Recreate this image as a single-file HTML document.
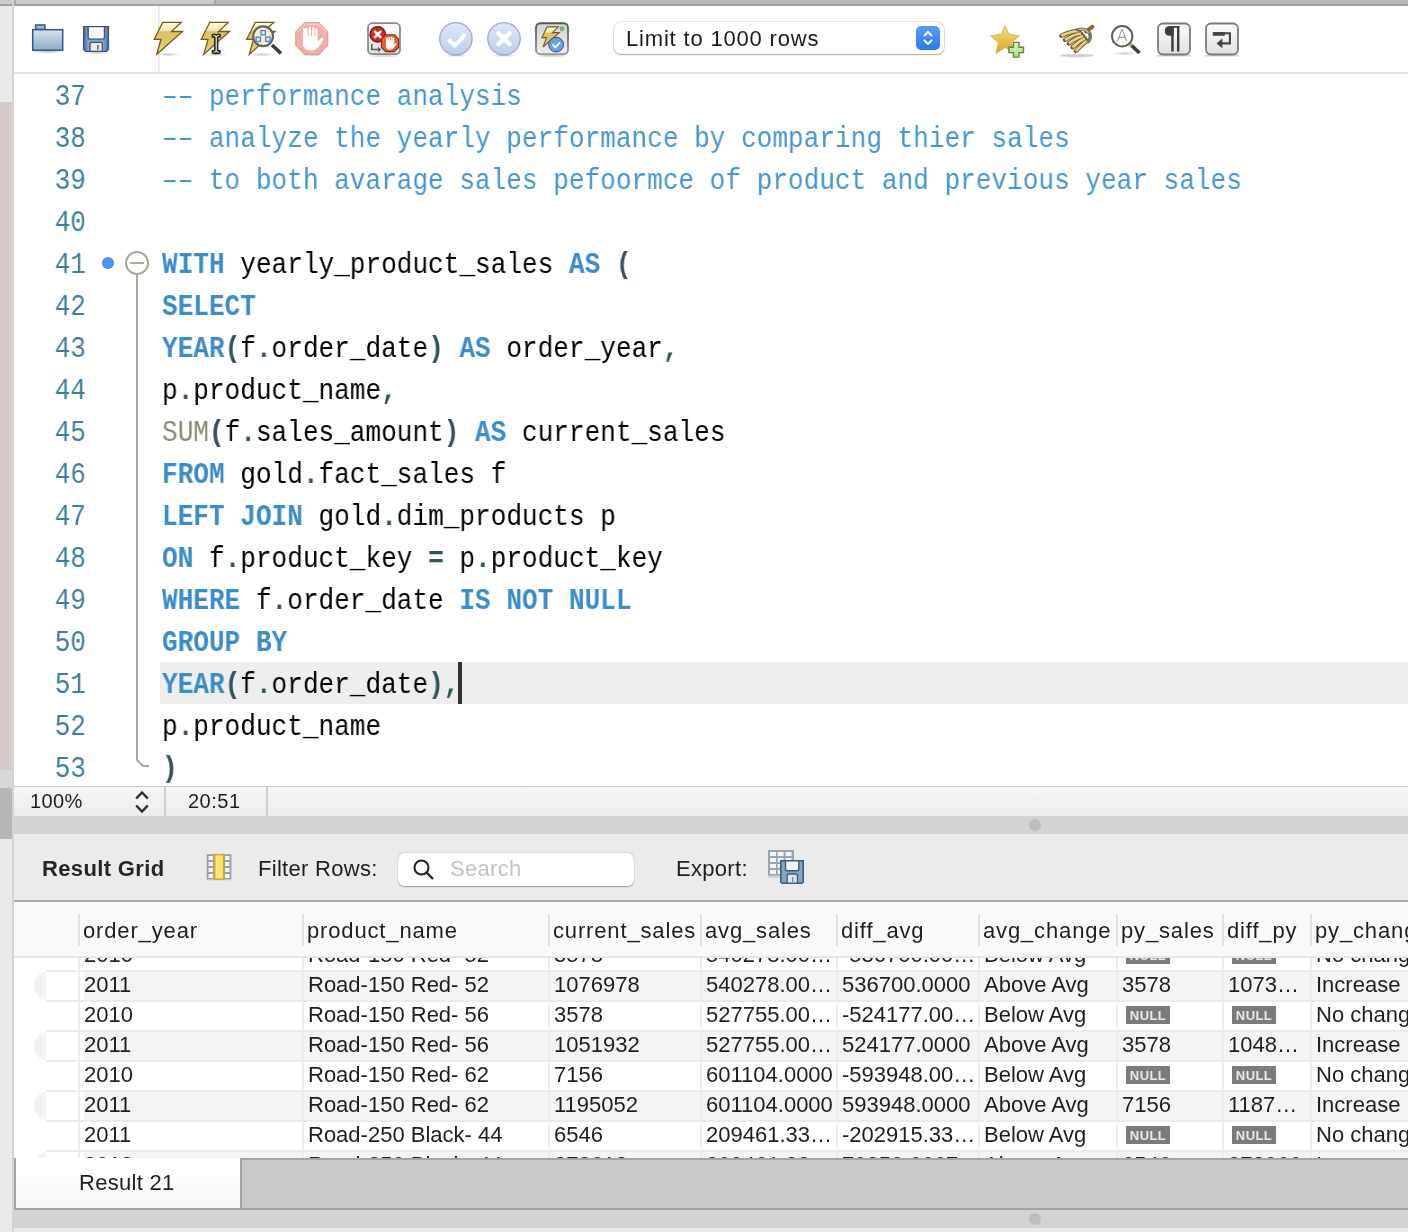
<!DOCTYPE html><html><head><meta charset="utf-8"><style>*{margin:0;padding:0;box-sizing:border-box}
html,body{width:1408px;height:1232px;overflow:hidden;background:#fff;font-family:"Liberation Sans",sans-serif}
.abs,.ln,.code,.row,.cell,.hdr,.htxt{will-change:transform}
.abs{position:absolute}
#left{left:0;top:0;width:12px;height:1232px;background:#e9e9e9}
#leftpink{left:0;top:102px;width:12px;height:668px;background:#d6cac9}
#leftg1{left:0;top:770px;width:12px;height:18px;background:#d8d8d8}
#leftg2{left:0;top:788px;width:12px;height:51px;background:#b6b6b6}
#leftb{left:12px;top:0;width:2px;height:1232px;background:#d3d3d3}
#topbar{left:14px;top:0;width:1394px;height:6px;background:#b9b9b9}
#topleft{left:0;top:0;width:12px;height:4px;background:#cbcbcb}
#toolbar{left:14px;top:6px;width:1394px;height:66px;background:#fff}
#tbline{left:14px;top:72px;width:1394px;height:2px;background:#e3e3e3}
#editor{left:14px;top:74px;width:1394px;height:712px;background:#fff;overflow:hidden}
.ln{position:absolute;left:0;width:72px;text-align:right;font-family:"Liberation Mono",monospace;font-size:29px;transform:scaleX(0.8993);transform-origin:right;color:#3a7f9b;height:42px;line-height:42px}
.code{position:absolute;left:148px;font-family:"Liberation Mono",monospace;font-size:29px;transform:scaleX(0.8993);transform-origin:left;height:42px;line-height:42px;white-space:pre;color:#000}
.k{color:#3b8dca;font-weight:bold}
.c{color:#4496d2}
.p{color:#2f5459;font-weight:bold}
.f{color:#8b8a74}
#status{left:14px;top:786px;width:1394px;height:30px;background:linear-gradient(#f6f6f6,#ececec);border-top:1px solid #c8c8c8}
#split1{left:14px;top:816px;width:1394px;height:18px;background:#d3d3d3}
#rtool{left:14px;top:834px;width:1394px;height:66px;background:#ebebeb}
#grid{left:14px;top:900px;width:1394px;height:258px;background:#fff;overflow:hidden;border-top:2px solid #a9a9a9}
#grid{border-top:none}
#tabbar{left:14px;top:1158px;width:1394px;height:52px;background:#c9c9c9;border-top:2px solid #a5a5a5;border-bottom:2px solid #a3a3a3}
#split2{left:14px;top:1210px;width:1394px;height:18px;background:#d3d3d3}
#bottom{left:14px;top:1228px;width:1394px;height:4px;background:#ebebeb}
.ui{font-family:"Liberation Sans",sans-serif;color:#1e1e1e}
.hdr{position:absolute;top:0;height:58px;background:#f8f9f9;width:1394px;left:0;border-top:2px solid #a9a9a9;border-bottom:2px solid #e6e6e6;z-index:2}
.hsep{position:absolute;top:12px;width:2px;height:32px;background:#e3e3e3}
.htxt{position:absolute;top:16px;font-size:22px;line-height:26px;color:#1e1e1e;white-space:nowrap;letter-spacing:0.85px}
.row{position:absolute;left:0;width:1394px;height:30px;border-bottom:2px solid #ebebeb;border-image:linear-gradient(to right,#fff 0,#fff 32px,#ebebeb 32px) 0 0 1 0}
.cell{position:absolute;top:0;font-size:22px;line-height:25px;color:#1e1e1e;white-space:nowrap;overflow:hidden}
.csep{position:absolute;top:0;width:2px;height:30px;background:#ececec}
.null{position:absolute;top:4px;background:#7b7b7b;color:#e9e9e9;font-size:13px;font-weight:bold;height:18px;line-height:19px;width:44px;text-align:center;letter-spacing:0.4px}
</style></head><body>
<div id="left" class="abs"></div><div id="leftpink" class="abs"></div><div id="leftg1" class="abs"></div><div id="leftg2" class="abs"></div>
<div id="leftb" class="abs"></div>
<div id="topbar" class="abs"><div class="abs" style="left:0;top:0;width:200px;height:4px;background:#cbcbcb"></div><div class="abs" style="left:200px;top:0;width:2px;height:4px;background:#a9a9a9"></div><div class="abs" style="left:0;top:4px;width:1394px;height:2px;background:#a0a0a0"></div></div>
<div id="topleft" class="abs"></div><div class="abs" style="left:0;top:4px;width:12px;height:2px;background:#a0a0a0"></div><div class="abs" style="left:14px;top:0;width:2px;height:4px;background:#a3a3a3"></div>
<div id="toolbar" class="abs"></div>
<svg class="abs" style="left:0;top:0;z-index:5" width="1408" height="74" viewBox="0 0 1408 74">
<defs>
<linearGradient id="gFold" x1="0" y1="0" x2="0" y2="1"><stop offset="0" stop-color="#d6e4f0"/><stop offset="1" stop-color="#8eaac6"/></linearGradient>
<linearGradient id="gFlop" x1="0" y1="0" x2="1" y2="0"><stop offset="0" stop-color="#4f7499"/><stop offset="0.2" stop-color="#86a5c2"/><stop offset="0.8" stop-color="#86a5c2"/><stop offset="1" stop-color="#4f7499"/></linearGradient>
<linearGradient id="gBolt" x1="0" y1="0" x2="0" y2="1"><stop offset="0" stop-color="#fdf9e6"/><stop offset="0.27" stop-color="#f0e6b4"/><stop offset="0.29" stop-color="#d8c366"/><stop offset="0.7" stop-color="#dbc868"/><stop offset="1" stop-color="#f0e4a0"/></linearGradient>
<linearGradient id="gBlueC" x1="0" y1="0" x2="0" y2="1"><stop offset="0" stop-color="#dde8f8"/><stop offset="1" stop-color="#bccfea"/></linearGradient>
<linearGradient id="gBox" x1="0" y1="0" x2="0" y2="1"><stop offset="0" stop-color="#fdfdfd"/><stop offset="1" stop-color="#e0e0e0"/></linearGradient>
<linearGradient id="gBox2" x1="0" y1="0" x2="0" y2="1"><stop offset="0" stop-color="#d4d4d4"/><stop offset="1" stop-color="#ececec"/></linearGradient>
<linearGradient id="gBox2b" x1="0" y1="0" x2="0" y2="1"><stop offset="0" stop-color="#585858"/><stop offset="1" stop-color="#9a9a9a"/></linearGradient>
<linearGradient id="gStar" x1="0" y1="0" x2="0" y2="1"><stop offset="0" stop-color="#f6e27a"/><stop offset="1" stop-color="#dba236"/></linearGradient>
<linearGradient id="gPlus" x1="0" y1="0" x2="0" y2="1"><stop offset="0" stop-color="#d8f5c4"/><stop offset="1" stop-color="#a7dc86"/></linearGradient>
<radialGradient id="gShadow"><stop offset="0" stop-color="#000" stop-opacity="0.22"/><stop offset="1" stop-color="#000" stop-opacity="0"/></radialGradient>
<clipPath id="cb1"><path d="M8.7 0.4 H27.2 L17.4 9.5 H28.5 L2.8 32.2 L7 17.3 H0.2 Z" transform="translate(154 22)"/></clipPath><clipPath id="cb2"><path d="M8.7 0.4 H27.2 L17.4 9.5 H28.5 L2.8 32.2 L7 17.3 H0.2 Z" transform="translate(201 22)"/></clipPath><clipPath id="cb3"><path d="M8.7 0.4 H27.2 L17.4 9.5 H28.5 L2.8 32.2 L7 17.3 H0.2 Z" transform="translate(246.5 22)"/></clipPath>
</defs>
<!-- folder -->
<ellipse cx="47.5" cy="52" rx="16" ry="1.8" fill="url(#gShadow)"/>
<path d="M35.5 29.5 V25 H45 V29.5 Z" fill="#9ab5cf" stroke="#2f5a85" stroke-width="1.4"/>
<rect x="32.7" y="29.7" width="30" height="20.6" fill="url(#gFold)" stroke="#2f5a85" stroke-width="1.5"/>
<!-- floppy -->
<ellipse cx="96" cy="53" rx="13" ry="1.6" fill="url(#gShadow)"/>
<path d="M83.7 26.6 H108.4 V49.5 L106.5 51.4 H85.6 L83.7 49.5 Z" fill="url(#gFlop)" stroke="#35597c" stroke-width="1.4"/>
<path d="M88.2 26.6 V37 Q88.2 39.2 90.4 39.2 H102.2 Q104.4 39.2 104.4 37 V26.6 Z" fill="#fff" stroke="#35597c" stroke-width="1.3"/>
<path d="M90 51.4 V44 Q90 42.3 91.7 42.3 H100.6 Q102.3 42.3 102.3 44 V51.4 Z" fill="#e9e9e9" stroke="#35597c" stroke-width="1.3"/>
<rect x="97" y="45" width="1.8" height="4.8" fill="#777"/>
<line x1="158.8" y1="6" x2="158.8" y2="72" stroke="#e3e3e3" stroke-width="1.5"/>
<!-- bolt 1 -->
<ellipse cx="168" cy="54.5" rx="13" ry="1.8" fill="url(#gShadow)"/>
<path d="M8.7 0.4 H27.2 L17.4 9.5 H28.5 L2.8 32.2 L7 17.3 H0.2 Z" transform="translate(154 22)" fill="url(#gBolt)"/><path d="M8.7 0.4 H27.2 L17.4 9.5 H28.5 L2.8 32.2 L7 17.3 H0.2 Z" transform="translate(154 22)" fill="none" stroke="#fffbe6" stroke-width="4" clip-path="url(#cb1)" stroke-opacity="0.85"/><path d="M8.7 0.4 H27.2 L17.4 9.5 H28.5 L2.8 32.2 L7 17.3 H0.2 Z" transform="translate(154 22)" fill="none" stroke="#7a5a17" stroke-width="1.3"/>
<!-- bolt 2 + ibeam -->
<ellipse cx="215" cy="54.5" rx="13" ry="1.8" fill="url(#gShadow)"/>
<path d="M8.7 0.4 H27.2 L17.4 9.5 H28.5 L2.8 32.2 L7 17.3 H0.2 Z" transform="translate(201 22)" fill="url(#gBolt)"/><path d="M8.7 0.4 H27.2 L17.4 9.5 H28.5 L2.8 32.2 L7 17.3 H0.2 Z" transform="translate(201 22)" fill="none" stroke="#fffbe6" stroke-width="4" clip-path="url(#cb2)" stroke-opacity="0.85"/><path d="M8.7 0.4 H27.2 L17.4 9.5 H28.5 L2.8 32.2 L7 17.3 H0.2 Z" transform="translate(201 22)" fill="none" stroke="#7a5a17" stroke-width="1.3"/>
<path d="M212.5 34.8 Q214.3 33.6 216.2 35 Q218.1 33.6 219.9 34.8 V36.8 Q218.6 36.4 217.6 37.4 V50.3 Q218.6 51.3 219.9 50.9 V52.9 Q218.1 54.1 216.2 52.7 Q214.3 54.1 212.5 52.9 V50.9 Q213.8 51.3 214.8 50.3 V37.4 Q213.8 36.4 212.5 36.8 Z" fill="#fff" stroke="#2a2a2a" stroke-width="1.7"/>
<!-- bolt 3 + magnifier -->
<ellipse cx="262" cy="54.5" rx="13" ry="1.8" fill="url(#gShadow)"/>
<path d="M8.7 0.4 H27.2 L17.4 9.5 H28.5 L2.8 32.2 L7 17.3 H0.2 Z" transform="translate(246.5 22)" fill="url(#gBolt)"/><path d="M8.7 0.4 H27.2 L17.4 9.5 H28.5 L2.8 32.2 L7 17.3 H0.2 Z" transform="translate(246.5 22)" fill="none" stroke="#fffbe6" stroke-width="4" clip-path="url(#cb3)" stroke-opacity="0.85"/><path d="M8.7 0.4 H27.2 L17.4 9.5 H28.5 L2.8 32.2 L7 17.3 H0.2 Z" transform="translate(246.5 22)" fill="none" stroke="#7a5a17" stroke-width="1.3"/>
<line x1="272" y1="45" x2="281" y2="53.5" stroke="#3e3e3e" stroke-width="3.6" stroke-linecap="butt"/>
<circle cx="263.1" cy="36.3" r="9.9" fill="#fbf6dc" fill-opacity="0.85" stroke="#626262" stroke-width="2.2"/>
<rect x="261" y="30.5" width="4.4" height="4.4" fill="#dfe8f6" stroke="#4f7fc6" stroke-width="1.3"/>
<rect x="256.1" y="37.1" width="4.4" height="4.4" fill="#dfe8f6" stroke="#4f7fc6" stroke-width="1.3"/>
<rect x="265.7" y="37.1" width="4.4" height="4.4" fill="#dfe8f6" stroke="#4f7fc6" stroke-width="1.3"/>
<!-- stop hand -->
<ellipse cx="312" cy="54.5" rx="14" ry="1.5" fill="url(#gShadow)"/>
<path d="M305 22.6 H318.6 L327.7 32 V45.3 L318.6 54.6 H305 L295.8 45.3 V32 Z" fill="#efafa6" stroke="#d99f98" stroke-width="1.2"/>
<path d="M303 28 V44 Q303 50.5 310.5 50.5 Q316.5 50.5 320 45 L323.5 39 Q322 37 320.5 38.5 L317.6 41.6 V29 Q316.5 27.5 315.4 29 V36 H314.4 V27.5 Q313.2 26 312 27.5 V36 H311 V27.5 Q309.8 26 308.6 27.5 V36 H307.6 V28.5 Q306.4 27 305.2 28.5 Z" fill="#fff"/>
<path d="M297 32.3 L305.3 24 H318.3 L326.5 32.3" fill="none" stroke="#fbe1dd" stroke-width="1"/>
<!-- stop on error box -->
<ellipse cx="384" cy="56" rx="17" ry="1.6" fill="url(#gShadow)"/>
<rect x="368" y="23.2" width="32" height="31" rx="4.5" fill="url(#gBox)" stroke="#888" stroke-width="1.8"/>
<path d="M371.8 44 V49.5 H378.5" fill="none" stroke="#5a5a5a" stroke-width="1.6"/>
<path d="M378 46.8 L381.3 49.5 L378 52.2 Z" fill="#5a5a5a"/>
<circle cx="377.7" cy="34.4" r="7.8" fill="#c8281f" stroke="#6e1515" stroke-width="1.2"/>
<path d="M374.2 30.9 L381.2 37.9 M381.2 30.9 L374.2 37.9" stroke="#fff" stroke-width="2.6"/>
<path d="M385.6 34.8 H394.4 L398.5 38.9 V47.5 L394.4 51.6 H385.6 L381.5 47.5 V38.9 Z" fill="#e5602f" stroke="#8a2512" stroke-width="1.1"/>
<path d="M386 40 V46 Q386 49.8 389.8 49.8 Q393 49.8 394.6 47 L396.6 43.6 Q395.9 42.6 395 43.4 L393.6 44.8 V40 Z" fill="#fff"/><rect x="386" y="37.6" width="1.8" height="6" rx="0.9" fill="#fff"/><rect x="388.3" y="36.8" width="1.8" height="6" rx="0.9" fill="#fff"/><rect x="390.6" y="36.8" width="1.8" height="6" rx="0.9" fill="#fff"/><rect x="392.4" y="37.6" width="1.8" height="6" rx="0.9" fill="#fff"/><path d="M388.1 39 V42.5 M390.4 38.5 V42.5 M392.3 39 V42.5" stroke="#e9b3a3" stroke-width="0.5"/>
<!-- check circle -->
<ellipse cx="456" cy="55.5" rx="13" ry="1.6" fill="url(#gShadow)"/>
<circle cx="455.9" cy="38.8" r="16.2" fill="url(#gBlueC)" stroke="#a1abc2" stroke-width="1.3"/>
<path d="M448.5 39.5 L454.6 45.6 L465.5 34.2" fill="none" stroke="#fff" stroke-width="4.2" stroke-linejoin="miter"/>
<!-- x circle -->
<ellipse cx="504" cy="55.5" rx="13" ry="1.6" fill="url(#gShadow)"/>
<circle cx="504" cy="38.8" r="16.2" fill="url(#gBlueC)" stroke="#a1abc2" stroke-width="1.3"/>
<path d="M497.3 32 L510.7 45.6 M510.7 32 L497.3 45.6" fill="none" stroke="#fff" stroke-width="4.2"/>
<!-- autocommit -->
<ellipse cx="552" cy="56" rx="17" ry="1.6" fill="url(#gShadow)"/>
<rect x="536" y="23.2" width="32" height="31" rx="4.5" fill="url(#gBox2)" stroke="url(#gBox2b)" stroke-width="1.9"/>
<path d="M547 26.9 H558.3 L552.5 32.6 H559.3 L543 47 L546.6 37.6 H541.9 Z" fill="url(#gBolt)" stroke="#7a5a17" stroke-width="1.1"/>
<circle cx="562" cy="28.8" r="2.4" fill="#3a3a3a" fill-opacity="0.5"/>
<circle cx="562" cy="28.8" r="1.5" fill="#5ee03a"/>
<circle cx="556.1" cy="44.6" r="7.4" fill="#6f9ee0" stroke="#2c4e8e" stroke-width="1"/>
<path d="M552.6 44.6 L555.3 47.3 L560 42.3" fill="none" stroke="#fff" stroke-width="1.9"/>
<!-- limit select -->
<!-- star plus -->
<path d="M1005 25.8 L1008.6 33.9 L1019.4 36 L1011.6 42.3 L1013.6 52.5 L1005 47.5 L996 53.4 L998.4 42.5 L990.6 36 L1001.4 33.9 Z" fill="url(#gStar)" stroke="#d7ab3e" stroke-width="0.8" stroke-linejoin="round"/>
<path d="M1013.4 42.4 H1019 V47.3 H1023.5 V52.6 H1019 V57.1 H1013.4 V52.6 H1008.9 V47.3 H1013.4 Z" fill="url(#gPlus)" stroke="#5d8b34" stroke-width="1.4"/>
<!-- broom -->
<ellipse cx="1077" cy="55.6" rx="17" ry="1.8" fill="#d2d2d2"/><line x1="1086" y1="31.5" x2="1092.3" y2="26.8" stroke="#8b6327" stroke-width="4" stroke-linecap="round"/><path d="M1079 31 Q1071.7 30.9 1061.4 35.7" fill="none" stroke="#6f5a30" stroke-width="4.4" stroke-linecap="round"/><path d="M1081 33.5 Q1074.5 34.1 1065 39.8" fill="none" stroke="#6f5a30" stroke-width="4.4" stroke-linecap="round"/><path d="M1083 36 Q1077.4 37.2 1068.8 43.5" fill="none" stroke="#6f5a30" stroke-width="4.4" stroke-linecap="round"/><path d="M1085 38.5 Q1080.2 40.4 1072.5 47.2" fill="none" stroke="#6f5a30" stroke-width="4.4" stroke-linecap="round"/><path d="M1087 41 Q1082.9 43.5 1075.8 51" fill="none" stroke="#6f5a30" stroke-width="4.4" stroke-linecap="round"/><path d="M1079 31 Q1071.7 30.9 1061.4 35.7" fill="none" stroke="#ecd38c" stroke-width="2.6" stroke-linecap="butt"/><path d="M1081 33.5 Q1074.5 34.1 1065 39.8" fill="none" stroke="#ecd38c" stroke-width="2.6" stroke-linecap="butt"/><path d="M1083 36 Q1077.4 37.2 1068.8 43.5" fill="none" stroke="#ecd38c" stroke-width="2.6" stroke-linecap="butt"/><path d="M1085 38.5 Q1080.2 40.4 1072.5 47.2" fill="none" stroke="#ecd38c" stroke-width="2.6" stroke-linecap="butt"/><path d="M1087 41 Q1082.9 43.5 1075.8 51" fill="none" stroke="#ecd38c" stroke-width="2.6" stroke-linecap="butt"/><path d="M1077.5 29.8 Q1085 27.5 1089.5 33 Q1091.5 38 1088.3 41.5" fill="none" stroke="#77715f" stroke-width="3.4" stroke-linecap="round"/><path d="M1078.5 29.5 Q1085 27.8 1088.8 33" fill="none" stroke="#c9c3ad" stroke-width="1.2"/>
<!-- magnifier A -->
<ellipse cx="1125" cy="53.5" rx="13" ry="1.8" fill="url(#gShadow)"/>
<line x1="1131" y1="45" x2="1139.5" y2="53" stroke="#3c3c3c" stroke-width="3.6"/>
<line x1="1130" y1="44" x2="1131.8" y2="45.8" stroke="#c8a35a" stroke-width="3.6"/>
<circle cx="1122.2" cy="36.2" r="10.2" fill="#fff" stroke="#5e5e5e" stroke-width="2"/>
<path d="M1117.3 41.3 L1122 29 L1126.7 41.3 M1118.8 37.3 H1125.2" fill="none" stroke="#8a8a8a" stroke-width="1"/>
<!-- pilcrow box -->
<rect x="1157" y="54.5" width="34" height="2" fill="#d6d6d6"/>
<rect x="1158" y="23.5" width="32" height="31" rx="5" fill="url(#gBox)" stroke="#7a7a7a" stroke-width="1.8"/>
<path d="M1173.6 26 V35.8 H1170 Q1164.8 35.8 1164.8 30.9 Q1164.8 26 1170 26 Z" fill="#3f3f3f"/><rect x="1171.2" y="26" width="8.2" height="1.8" fill="#3f3f3f"/><rect x="1171.2" y="26" width="2.5" height="25.5" fill="#3f3f3f"/><rect x="1177" y="26" width="2.4" height="25.5" fill="#3f3f3f"/>
<!-- wrap box -->
<rect x="1205" y="54.5" width="34" height="2" fill="#d6d6d6"/>
<rect x="1206" y="23.5" width="32" height="31" rx="5" fill="url(#gBox)" stroke="#7a7a7a" stroke-width="1.8"/>
<rect x="1212.8" y="32" width="12" height="3.8" fill="#454545"/>
<path d="M1223.5 33.2 H1229.9 V43.4 H1220" fill="none" stroke="#454545" stroke-width="2.1"/>
<path d="M1216.5 43.4 L1222.4 38.3 V48.3 Z" fill="#454545"/>
</svg>
<div class="abs" style="left:614px;top:22px;width:330px;height:32px;background:#fff;border-radius:7px;box-shadow:0 0 0 0.6px rgba(0,0,0,0.18),0 1px 1.5px rgba(0,0,0,0.28);z-index:5"></div>
<div class="abs" style="left:916px;top:26px;width:24px;height:24px;background:linear-gradient(#5a9bf7,#2f78ea);border-radius:5px;z-index:6"></div>
<svg class="abs" style="left:916px;top:26px;z-index:7" width="24" height="24"><path d="M8 10 L12 6 L16 10 M8 14 L12 18 L16 14" fill="none" stroke="#fff" stroke-width="2"/></svg>
<div class="abs ui" style="left:626px;top:27px;font-size:22px;line-height:24px;color:#1b1b1b;z-index:7;letter-spacing:0.82px">Limit to 1000 rows</div>

<div id="tbline" class="abs"></div>
<div id="editor" class="abs">
<div class="abs" style="left:146px;top:588px;width:1248px;height:42px;background:#eeeeee"></div>
<div class="ln" style="top:2.5px">37</div>
<div class="code" style="top:2.5px"><span class="c">–– performance analysis</span></div>
<div class="ln" style="top:44.5px">38</div>
<div class="code" style="top:44.5px"><span class="c">–– analyze the yearly performance by comparing thier sales</span></div>
<div class="ln" style="top:86.5px">39</div>
<div class="code" style="top:86.5px"><span class="c">–– to both avarage sales pefoormce of product and previous year sales</span></div>
<div class="ln" style="top:128.5px">40</div>
<div class="code" style="top:128.5px"></div>
<div class="ln" style="top:170.5px">41</div>
<div class="code" style="top:170.5px"><span class="k">WITH</span> yearly_product_sales <span class="k">AS</span> <span class="p">(</span></div>
<div class="ln" style="top:212.5px">42</div>
<div class="code" style="top:212.5px"><span class="k">SELECT</span></div>
<div class="ln" style="top:254.5px">43</div>
<div class="code" style="top:254.5px"><span class="k">YEAR</span><span class="p">(</span>f<span class="p">.</span>order_date<span class="p">)</span> <span class="k">AS</span> order_year<span class="p">,</span></div>
<div class="ln" style="top:296.5px">44</div>
<div class="code" style="top:296.5px">p<span class="p">.</span>product_name<span class="p">,</span></div>
<div class="ln" style="top:338.5px">45</div>
<div class="code" style="top:338.5px"><span class="f">SUM</span><span class="p">(</span>f<span class="p">.</span>sales_amount<span class="p">)</span> <span class="k">AS</span> current_sales</div>
<div class="ln" style="top:380.5px">46</div>
<div class="code" style="top:380.5px"><span class="k">FROM</span> gold<span class="p">.</span>fact_sales f</div>
<div class="ln" style="top:422.5px">47</div>
<div class="code" style="top:422.5px"><span class="k">LEFT</span> <span class="k">JOIN</span> gold<span class="p">.</span>dim_products p</div>
<div class="ln" style="top:464.5px">48</div>
<div class="code" style="top:464.5px"><span class="k">ON</span> f<span class="p">.</span>product_key <span class="p">=</span> p<span class="p">.</span>product_key</div>
<div class="ln" style="top:506.5px">49</div>
<div class="code" style="top:506.5px"><span class="k">WHERE</span> f<span class="p">.</span>order_date <span class="k">IS</span> <span class="k">NOT</span> <span class="k">NULL</span></div>
<div class="ln" style="top:548.5px">50</div>
<div class="code" style="top:548.5px"><span class="k">GROUP</span> <span class="k">BY</span></div>
<div class="ln" style="top:590.5px">51</div>
<div class="code" style="top:590.5px"><span class="k">YEAR</span><span class="p">(</span>f<span class="p">.</span>order_date<span class="p">),</span></div>
<div class="ln" style="top:632.5px">52</div>
<div class="code" style="top:632.5px">p<span class="p">.</span>product_name</div>
<div class="ln" style="top:674.5px">53</div>
<div class="code" style="top:674.5px"><span class="p">)</span></div>
<div class="abs" style="left:444px;top:588px;width:4px;height:42px;background:#333"></div>
<div class="abs" style="left:88px;top:183px;width:12px;height:12px;border-radius:50%;background:radial-gradient(#4a96f7 40%,#3b82e6 100%)"></div>
<svg class="abs" style="left:100px;top:170px" width="60" height="530" viewBox="0 0 60 530"><circle cx="23" cy="19" r="11" fill="#fff" stroke="#a9a99a" stroke-width="2"/><line x1="16" y1="19" x2="30" y2="19" stroke="#a9a99a" stroke-width="2"/><path d="M23 30 V516 L29 522 H35" fill="none" stroke="#a9a99a" stroke-width="2"/></svg>
</div>
<div id="status" class="abs">
<div class="abs ui" style="left:16px;top:3px;font-size:20px;line-height:22px;letter-spacing:0.4px">100%</div>
<svg class="abs" style="left:119px;top:2px" width="18" height="26"><path d="M3.2 9.5 L9 3.5 L14.8 9.5 M3.2 16.5 L9 22.5 L14.8 16.5" fill="none" stroke="#2e2e2e" stroke-width="2.5"/></svg>
<div class="abs" style="left:150px;top:0;width:2px;height:29px;background:#cfcfcf"></div>
<div class="abs ui" style="left:174px;top:3px;font-size:20px;line-height:22px;letter-spacing:0.5px">20:51</div>
<div class="abs" style="left:252px;top:0;width:2px;height:29px;background:#cfcfcf"></div>
</div>
<div id="split1" class="abs"><div class="abs" style="left:1015px;top:3px;width:12px;height:12px;border-radius:50%;background:#bdbdbd"></div></div>
<div id="rtool" class="abs">
<div class="abs ui" style="left:28px;top:22px;font-size:22px;font-weight:bold;line-height:26px;letter-spacing:0.35px;color:#262626">Result Grid</div>
<svg class="abs" style="left:-14px;top:-834px" width="1408" height="1232" viewBox="0 0 1408 1232">
<rect x="206.2" y="878.5" width="25.7" height="2" fill="#000" fill-opacity="0.08"/>
<rect x="206.7" y="854.2" width="24.7" height="25.2" fill="#9aa0aa"/>
<g fill="#eef2f6">
<rect x="208.5" y="856" width="4.6" height="4"/><rect x="208.5" y="862" width="4.6" height="4"/><rect x="208.5" y="868" width="4.6" height="4"/><rect x="208.5" y="874" width="4.6" height="4"/>
<rect x="225" y="856" width="4.6" height="4"/><rect x="225" y="862" width="4.6" height="4"/><rect x="225" y="868" width="4.6" height="4"/><rect x="225" y="874" width="4.6" height="4"/>
</g>
<rect x="214.6" y="854.6" width="9" height="24.6" fill="#f9e872" stroke="#d7a437" stroke-width="1.6"/>
<!-- export -->
<rect x="768" y="850" width="26" height="25.7" fill="#9ca3ad"/>
<g fill="#f2f6fa">
<rect x="770" y="852" width="6" height="4"/><rect x="777.6" y="852" width="6" height="4"/><rect x="785.6" y="852" width="6" height="4"/>
<rect x="770" y="858" width="6" height="4"/><rect x="777.6" y="858" width="6" height="4"/><rect x="785.6" y="858" width="6" height="4"/>
<rect x="770" y="864" width="6" height="4"/><rect x="777.6" y="864" width="6" height="4"/>
<rect x="770" y="870" width="6" height="4"/><rect x="777.6" y="870" width="6" height="4"/>
</g>
<rect x="768" y="876" width="14" height="2" fill="#000" fill-opacity="0.1"/>
<path d="M780.8 860.7 H803.2 V881.8 L801.8 883.2 H782.2 L780.8 881.8 Z" fill="#85a5c0" stroke="#3b5f80" stroke-width="1.6"/>
<path d="M785.5 860.7 V869 Q785.5 870.8 787.3 870.8 H797 Q798.8 870.8 798.8 869 V860.7 Z" fill="#f4f6f8" stroke="#3b5f80" stroke-width="1.4"/>
<path d="M787.1 883.2 V876 Q787.1 874 789.1 874 H795.5 Q797.5 874 797.5 876 V883.2 Z" fill="#dfe3e7" stroke="#3b5f80" stroke-width="1.4"/>
<rect x="792" y="877" width="1.4" height="5" fill="#888"/>
</svg>

<div class="abs ui" style="left:244px;top:22px;font-size:22px;line-height:26px;letter-spacing:0.3px">Filter Rows:</div>
<div class="abs" style="left:384px;top:19px;width:236px;height:33px;background:#fff;border-radius:7px;box-shadow:0 0.5px 1.5px rgba(0,0,0,0.35)"></div>
<svg class="abs" style="left:398px;top:24px" width="24" height="24"><circle cx="9.5" cy="9.5" r="7" fill="none" stroke="#222" stroke-width="2"/><line x1="14.5" y1="14.5" x2="21" y2="21" stroke="#222" stroke-width="2.4"/></svg>
<div class="abs ui" style="left:436px;top:22px;font-size:22px;line-height:26px;color:#c3c3c3;letter-spacing:0.3px">Search</div>
<div class="abs ui" style="left:662px;top:22px;font-size:22px;line-height:26px;letter-spacing:0.3px">Export:</div>
</div>
<div id="grid" class="abs">
<div class="hdr">
<div class="hsep" style="left:64px"></div><div class="htxt" style="left:69px">order_year</div>
<div class="hsep" style="left:288px"></div><div class="htxt" style="left:293px">product_name</div>
<div class="hsep" style="left:534px"></div><div class="htxt" style="left:539px">current_sales</div>
<div class="hsep" style="left:686px"></div><div class="htxt" style="left:691px">avg_sales</div>
<div class="hsep" style="left:822px"></div><div class="htxt" style="left:827px">diff_avg</div>
<div class="hsep" style="left:964px"></div><div class="htxt" style="left:969px">avg_change</div>
<div class="hsep" style="left:1102px"></div><div class="htxt" style="left:1107px">py_sales</div>
<div class="hsep" style="left:1208px"></div><div class="htxt" style="left:1213px">diff_py</div>
<div class="hsep" style="left:1296px"></div><div class="htxt" style="left:1301px">py_change</div>
</div>
<div class="row" style="top:42px;background:#fff">
<div class="csep" style="left:64px"></div>
<div class="cell" style="left:70px">2010</div>
<div class="csep" style="left:288px"></div>
<div class="cell" style="left:294px">Road-150 Red- 52</div>
<div class="csep" style="left:534px"></div>
<div class="cell" style="left:540px">3578</div>
<div class="csep" style="left:686px"></div>
<div class="cell" style="left:692px">540278.00…</div>
<div class="csep" style="left:822px"></div>
<div class="cell" style="left:828px">-536700.00…</div>
<div class="csep" style="left:964px"></div>
<div class="cell" style="left:970px">Below Avg</div>
<div class="csep" style="left:1102px"></div>
<div class="null" style="left:1112px">NULL</div>
<div class="csep" style="left:1208px"></div>
<div class="null" style="left:1218px">NULL</div>
<div class="csep" style="left:1296px"></div>
<div class="cell" style="left:1302px">No change</div>
</div>
<div class="row" style="top:72px;background:#f3f4f4">
<div class="abs" style="left:0;top:0;width:34px;height:28px;background:#fff"></div><div class="abs" style="left:20px;top:0;width:16px;height:28px;border-radius:12px 0 0 12px/14px 0 0 14px;background:#f1f2f2"></div><div class="abs" style="left:32px;top:0;width:38px;height:28px;background:#fff"></div>
<div class="csep" style="left:64px"></div>
<div class="cell" style="left:70px">2011</div>
<div class="csep" style="left:288px"></div>
<div class="cell" style="left:294px">Road-150 Red- 52</div>
<div class="csep" style="left:534px"></div>
<div class="cell" style="left:540px">1076978</div>
<div class="csep" style="left:686px"></div>
<div class="cell" style="left:692px">540278.00…</div>
<div class="csep" style="left:822px"></div>
<div class="cell" style="left:828px">536700.0000</div>
<div class="csep" style="left:964px"></div>
<div class="cell" style="left:970px">Above Avg</div>
<div class="csep" style="left:1102px"></div>
<div class="cell" style="left:1108px">3578</div>
<div class="csep" style="left:1208px"></div>
<div class="cell" style="left:1214px">1073…</div>
<div class="csep" style="left:1296px"></div>
<div class="cell" style="left:1302px">Increase</div>
</div>
<div class="row" style="top:102px;background:#fff">
<div class="csep" style="left:64px"></div>
<div class="cell" style="left:70px">2010</div>
<div class="csep" style="left:288px"></div>
<div class="cell" style="left:294px">Road-150 Red- 56</div>
<div class="csep" style="left:534px"></div>
<div class="cell" style="left:540px">3578</div>
<div class="csep" style="left:686px"></div>
<div class="cell" style="left:692px">527755.00…</div>
<div class="csep" style="left:822px"></div>
<div class="cell" style="left:828px">-524177.00…</div>
<div class="csep" style="left:964px"></div>
<div class="cell" style="left:970px">Below Avg</div>
<div class="csep" style="left:1102px"></div>
<div class="null" style="left:1112px">NULL</div>
<div class="csep" style="left:1208px"></div>
<div class="null" style="left:1218px">NULL</div>
<div class="csep" style="left:1296px"></div>
<div class="cell" style="left:1302px">No change</div>
</div>
<div class="row" style="top:132px;background:#f3f4f4">
<div class="abs" style="left:0;top:0;width:34px;height:28px;background:#fff"></div><div class="abs" style="left:20px;top:0;width:16px;height:28px;border-radius:12px 0 0 12px/14px 0 0 14px;background:#f1f2f2"></div><div class="abs" style="left:32px;top:0;width:38px;height:28px;background:#fff"></div>
<div class="csep" style="left:64px"></div>
<div class="cell" style="left:70px">2011</div>
<div class="csep" style="left:288px"></div>
<div class="cell" style="left:294px">Road-150 Red- 56</div>
<div class="csep" style="left:534px"></div>
<div class="cell" style="left:540px">1051932</div>
<div class="csep" style="left:686px"></div>
<div class="cell" style="left:692px">527755.00…</div>
<div class="csep" style="left:822px"></div>
<div class="cell" style="left:828px">524177.0000</div>
<div class="csep" style="left:964px"></div>
<div class="cell" style="left:970px">Above Avg</div>
<div class="csep" style="left:1102px"></div>
<div class="cell" style="left:1108px">3578</div>
<div class="csep" style="left:1208px"></div>
<div class="cell" style="left:1214px">1048…</div>
<div class="csep" style="left:1296px"></div>
<div class="cell" style="left:1302px">Increase</div>
</div>
<div class="row" style="top:162px;background:#fff">
<div class="csep" style="left:64px"></div>
<div class="cell" style="left:70px">2010</div>
<div class="csep" style="left:288px"></div>
<div class="cell" style="left:294px">Road-150 Red- 62</div>
<div class="csep" style="left:534px"></div>
<div class="cell" style="left:540px">7156</div>
<div class="csep" style="left:686px"></div>
<div class="cell" style="left:692px">601104.0000</div>
<div class="csep" style="left:822px"></div>
<div class="cell" style="left:828px">-593948.00…</div>
<div class="csep" style="left:964px"></div>
<div class="cell" style="left:970px">Below Avg</div>
<div class="csep" style="left:1102px"></div>
<div class="null" style="left:1112px">NULL</div>
<div class="csep" style="left:1208px"></div>
<div class="null" style="left:1218px">NULL</div>
<div class="csep" style="left:1296px"></div>
<div class="cell" style="left:1302px">No change</div>
</div>
<div class="row" style="top:192px;background:#f3f4f4">
<div class="abs" style="left:0;top:0;width:34px;height:28px;background:#fff"></div><div class="abs" style="left:20px;top:0;width:16px;height:28px;border-radius:12px 0 0 12px/14px 0 0 14px;background:#f1f2f2"></div><div class="abs" style="left:32px;top:0;width:38px;height:28px;background:#fff"></div>
<div class="csep" style="left:64px"></div>
<div class="cell" style="left:70px">2011</div>
<div class="csep" style="left:288px"></div>
<div class="cell" style="left:294px">Road-150 Red- 62</div>
<div class="csep" style="left:534px"></div>
<div class="cell" style="left:540px">1195052</div>
<div class="csep" style="left:686px"></div>
<div class="cell" style="left:692px">601104.0000</div>
<div class="csep" style="left:822px"></div>
<div class="cell" style="left:828px">593948.0000</div>
<div class="csep" style="left:964px"></div>
<div class="cell" style="left:970px">Above Avg</div>
<div class="csep" style="left:1102px"></div>
<div class="cell" style="left:1108px">7156</div>
<div class="csep" style="left:1208px"></div>
<div class="cell" style="left:1214px">1187…</div>
<div class="csep" style="left:1296px"></div>
<div class="cell" style="left:1302px">Increase</div>
</div>
<div class="row" style="top:222px;background:#fff">
<div class="csep" style="left:64px"></div>
<div class="cell" style="left:70px">2011</div>
<div class="csep" style="left:288px"></div>
<div class="cell" style="left:294px">Road-250 Black- 44</div>
<div class="csep" style="left:534px"></div>
<div class="cell" style="left:540px">6546</div>
<div class="csep" style="left:686px"></div>
<div class="cell" style="left:692px">209461.33…</div>
<div class="csep" style="left:822px"></div>
<div class="cell" style="left:828px">-202915.33…</div>
<div class="csep" style="left:964px"></div>
<div class="cell" style="left:970px">Below Avg</div>
<div class="csep" style="left:1102px"></div>
<div class="null" style="left:1112px">NULL</div>
<div class="csep" style="left:1208px"></div>
<div class="null" style="left:1218px">NULL</div>
<div class="csep" style="left:1296px"></div>
<div class="cell" style="left:1302px">No change</div>
</div>
<div class="row" style="top:252px;background:#f3f4f4">
<div class="abs" style="left:0;top:0;width:34px;height:28px;background:#fff"></div><div class="abs" style="left:20px;top:0;width:16px;height:28px;border-radius:12px 0 0 12px/14px 0 0 14px;background:#f1f2f2"></div><div class="abs" style="left:32px;top:0;width:38px;height:28px;background:#fff"></div>
<div class="csep" style="left:64px"></div>
<div class="cell" style="left:70px">2012</div>
<div class="csep" style="left:288px"></div>
<div class="cell" style="left:294px">Road-250 Black- 44</div>
<div class="csep" style="left:534px"></div>
<div class="cell" style="left:540px">278612</div>
<div class="csep" style="left:686px"></div>
<div class="cell" style="left:692px">209461.33…</div>
<div class="csep" style="left:822px"></div>
<div class="cell" style="left:828px">70350.6667</div>
<div class="csep" style="left:964px"></div>
<div class="cell" style="left:970px">Above Avg</div>
<div class="csep" style="left:1102px"></div>
<div class="cell" style="left:1108px">6546</div>
<div class="csep" style="left:1208px"></div>
<div class="cell" style="left:1214px">272066</div>
<div class="csep" style="left:1296px"></div>
<div class="cell" style="left:1302px">Increase</div>
</div>
</div>
<div id="tabbar" class="abs">
<div class="abs" style="left:0;top:-2px;width:228px;height:50px;background:linear-gradient(#fff,#f7f7f7);border-left:2px solid #a3a3a3;border-right:2px solid #a3a3a3"></div>
<div class="abs ui" style="left:65px;top:10px;font-size:22px;line-height:26px;letter-spacing:0.3px">Result 21</div>
</div>
<div id="split2" class="abs"><div class="abs" style="left:1015px;top:3px;width:12px;height:12px;border-radius:50%;background:#bdbdbd"></div></div>
<div id="bottom" class="abs"></div>
</body></html>
